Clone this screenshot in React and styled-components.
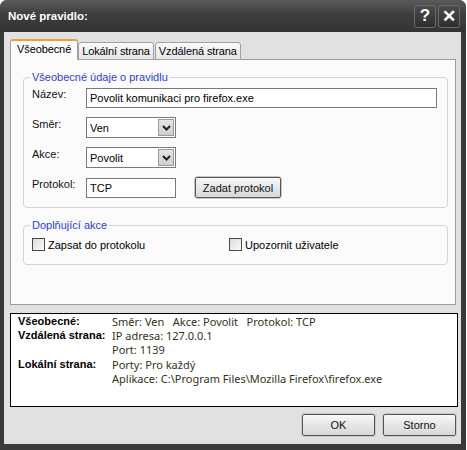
import React from "react";
import styled, { createGlobalStyle } from "styled-components";

const GlobalStyle = createGlobalStyle`
  body {
    margin: 0;
    background: #ffffff;
    font-family: "Liberation Sans", Arial, sans-serif;
    font-size: 11px;
    color: #000;
  }
`;

const Window = styled.div`
  width: 466px;
  height: 450px;
  box-sizing: border-box;
  background: #3a3a3a;
  border-radius: 7px 7px 0 0;
  display: flex;
  flex-direction: column;
  padding: 0 5px 6px 4px;
`;

const TitleBar = styled.div`
  height: 32px;
  flex-shrink: 0;
  display: flex;
  align-items: center;
  padding-left: 4px;
  margin: 0 -5px 0 -4px;
  padding-right: 6px;
  border-radius: 7px 7px 0 0;
  background: linear-gradient(#5a5a5a, #3e3e3e 45%, #333 100%);
`;

const Title = styled.div`
  flex: 1;
  color: #fff;
  font-weight: bold;
  font-size: 11.5px;
  padding-left: 4px;
`;

const CaptionButton = styled.div`
  width: 20px;
  height: 21px;
  margin-left: 2px;
  border: 1px solid #6a6a6a;
  border-radius: 3px;
  background: linear-gradient(#4c4c4c, #2e2e2e);
  color: #fff;
  display: flex;
  align-items: center;
  justify-content: center;
  font-size: 17px;
  font-weight: bold;
`;

const Client = styled.div`
  flex: 1;
  background: #e1e1e1;
  display: flex;
  flex-direction: column;
  padding: 7px 5px 0 6px;
`;

const TabStrip = styled.div`
  display: flex;
  align-items: flex-end;
  height: 21px;
  position: relative;
  z-index: 1;
`;

const Tab = styled.div`
  box-sizing: border-box;
  height: ${(p) => (p.$active ? "21px" : "18px")};
  padding: 0 ${(p) => (p.$active ? "6px" : "3px")};
  margin-right: ${(p) => (p.$active ? "0" : "1px")};
  display: flex;
  align-items: center;
  border: 1px solid #a0a0a0;
  border-bottom: ${(p) => (p.$active ? "none" : "1px solid #a0a0a0")};
  border-top: ${(p) => (p.$active ? "2px solid #f0a030" : "1px solid #a0a0a0")};
  border-radius: 3px 3px 0 0;
  background: ${(p) =>
    p.$active ? "#fbfbfb" : "linear-gradient(#fafafa, #e6e6e6)"};
  font-size: 11px;
  letter-spacing: -0.1px;
  padding-bottom: ${(p) => (p.$active ? "3px" : "0")};
`;

const Panel = styled.div`
  box-sizing: border-box;
  height: 246px;
  margin-top: -1px;
  border: 1px solid #9c9c9c;
  background: #fbfbfb;
  padding: 11px 7px 0 12px;
  display: flex;
  flex-direction: column;
  gap: 11px;
`;

const Group = styled.fieldset`
  margin: 0;
  padding: ${(p) => p.$pad || "4px 0 8px 8px"};
  border: 1px solid #d4d4d4;
  border-radius: 4px;
`;

const Legend = styled.legend`
  color: #2a3fd0;
  font-size: 11px;
  padding: 0 2px;
  margin-left: -2px;
`;

const FormGrid = styled.div`
  display: grid;
  grid-template-columns: 54px auto 1fr;
  grid-auto-rows: 21px;
  row-gap: 9px;
  align-items: center;
`;

const Label = styled.label`
  font-size: 11px;
  color: #111;
  align-self: start;
  padding-top: 1px;
`;

const TextBox = styled.div`
  box-sizing: border-box;
  height: ${(p) => p.$h || 20}px;
  width: ${(p) => p.$w}px;
  border: 1px solid #7a7a7a;
  background: #fff;
  display: flex;
  align-items: center;
  padding-left: 3px;
  font-size: 11px;
  grid-column: ${(p) => p.$span || "auto"};
`;

const Select = styled.div`
  box-sizing: border-box;
  width: 90px;
  height: 21px;
  border: 1px solid #7a7a7a;
  background: #fff;
  display: flex;
  align-items: center;
  justify-content: space-between;
  padding: 1px 1px 1px 3px;
  font-size: 11px;
  grid-column: 2 / 4;
`;

const DropButton = styled.div`
  width: 16px;
  height: 17px;
  box-sizing: border-box;
  border: 1px solid #9a9a9a;
  background: linear-gradient(#e4e4e4, #cfcfcf);
  display: flex;
  align-items: center;
  justify-content: center;
`;

const PushButton = styled.button`
  box-sizing: border-box;
  height: ${(p) => p.$h || 21}px;
  width: ${(p) => p.$w}px;
  border: 1px solid #555;
  border-radius: 2px;
  outline: 1px solid #c8c8c8;
  background: linear-gradient(#f8f8f8, #e6e6e6 50%, #d8d8d8);
  font-family: "Liberation Sans", Arial, sans-serif;
  font-size: 11px;
  color: #111;
  padding: 0;
  margin-left: ${(p) => p.$ml || 0}px;
`;

const CheckRow = styled.div`
  display: flex;
`;

const CheckItem = styled.label`
  display: flex;
  align-items: center;
  gap: 3px;
  font-size: 11px;
  width: ${(p) => p.$w}px;
`;

const CheckBox = styled.span`
  box-sizing: border-box;
  width: 13px;
  height: 13px;
  border: 1px solid #4a4a4a;
  background: linear-gradient(135deg, #dcdcdc, #fafafa);
`;

const Summary = styled.div`
  box-sizing: border-box;
  height: 94px;
  margin-top: 8px;
  margin-right: -2px;
  background: #fff;
  border: 1px solid #000;
  padding: 0 0 0 7px;
  display: grid;
  grid-template-columns: 94px 1fr;
  grid-auto-rows: 14.3px;
  font-family: "Noto Sans", "Liberation Sans", sans-serif;
  font-size: 11px;
  align-items: center;
`;

const Key = styled.div`
  font-family: "Liberation Sans", Arial, sans-serif;
  font-weight: bold;
  color: #000;
  grid-column: 1;
`;

const Val = styled.div`
  color: #333318;
  grid-column: 2;
  white-space: pre;
`;

const Footer = styled.div`
  display: flex;
  justify-content: flex-end;
  gap: 8px;
  padding-top: 7px;
`;

const Chevron = () => (
  <svg width="9" height="6" viewBox="0 0 9 6">
    <path d="M1 1 L4.5 4.5 L8 1" stroke="#222" strokeWidth="2" fill="none" />
  </svg>
);

const App = () => {
  return (
    <>
      <GlobalStyle />
      <Window>
        <TitleBar>
          <Title>Nové pravidlo:</Title>
          <CaptionButton>?</CaptionButton>
          <CaptionButton>✕</CaptionButton>
        </TitleBar>
        <Client>
          <TabStrip>
            <Tab $active>Všeobecné</Tab>
            <Tab>Lokální strana</Tab>
            <Tab>Vzdálená strana</Tab>
          </TabStrip>
          <Panel>
            <Group $pad="4px 0 9px 8px">
              <Legend>Všeobecné údaje o pravidlu</Legend>
              <FormGrid>
                <Label>Název:</Label>
                <TextBox $w={351} $span="2 / 4">
                  Povolit komunikaci pro firefox.exe
                </TextBox>
                <Label>Směr:</Label>
                <Select>
                  Ven
                  <DropButton>
                    <Chevron />
                  </DropButton>
                </Select>
                <Label>Akce:</Label>
                <Select>
                  Povolit
                  <DropButton>
                    <Chevron />
                  </DropButton>
                </Select>
                <Label>Protokol:</Label>
                <TextBox $w={90}>TCP</TextBox>
                <PushButton $w={86} $ml={19}>
                  Zadat protokol
                </PushButton>
              </FormGrid>
            </Group>
            <Group $pad="7px 0 13px 8px">
              <Legend>Doplňující akce</Legend>
              <CheckRow>
                <CheckItem $w={197}>
                  <CheckBox />
                  Zapsat do protokolu
                </CheckItem>
                <CheckItem>
                  <CheckBox />
                  Upozornit uživatele
                </CheckItem>
              </CheckRow>
            </Group>
          </Panel>
          <Summary>
            <Key>Všeobecné:</Key>
            <Val>{"Směr: Ven   Akce: Povolit   Protokol: TCP"}</Val>
            <Key>Vzdálená strana:</Key>
            <Val>IP adresa: 127.0.0.1</Val>
            <Val>Port: 1139</Val>
            <Key>Lokální strana:</Key>
            <Val>Porty: Pro každý</Val>
            <Val>Aplikace: C:\Program Files\Mozilla Firefox\firefox.exe</Val>
          </Summary>
          <Footer>
            <PushButton $w={73} $h={22}>
              OK
            </PushButton>
            <PushButton $w={73} $h={22}>
              Storno
            </PushButton>
          </Footer>
        </Client>
      </Window>
    </>
  );
};

export default App;
